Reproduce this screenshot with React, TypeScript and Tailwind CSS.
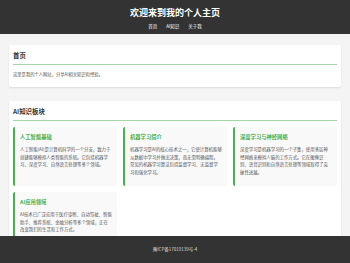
const TOPICS = [
  {
    title: '人工智能基础',
    text: '人工智能(AI)是计算机科学的一个分支，致力于创建能够模拟人类智能的系统。它包括机器学习、深度学习、自然语言处理等多个领域。',
  },
  {
    title: '机器学习简介',
    text: '机器学习是AI的核心技术之一，它使计算机能够从数据中学习并做出决策，而无需明确编程。常见的机器学习算法包括监督学习、无监督学习和强化学习。',
  },
  {
    title: '深度学习与神经网络',
    text: '深度学习是机器学习的一个子集，使用多层神经网络来模拟人脑的工作方式。它在图像识别、语音识别和自然语言处理等领域取得了突破性进展。',
  },
  {
    title: 'AI应用领域',
    text: 'AI技术已广泛应用于医疗诊断、自动驾驶、智能助手、推荐系统、金融分析等多个领域，正在改变我们的生活和工作方式。',
  },
];

const FONT = "font-['Noto_Sans_CJK_SC','Noto_Sans',sans-serif]";

export default function App() {
  return (
    <div className={`min-h-screen bg-[#f4f4f4] text-[#333] ${FONT}`}>
      {/* header */}
      <header className="flex h-[34px] flex-col items-center bg-[#333] pt-[7px] text-white">
        <h1 className="text-[9px] font-bold leading-[12px]">欢迎来到我的个人主页</h1>
        <nav className="mt-[4px] flex gap-[9px] text-[4.5px] leading-[6px]">
          <a>首页</a>
          <a>AI知识</a>
          <a>关于我</a>
        </nav>
      </header>

      <main className="flex flex-col gap-[14px] px-[9px] pt-[11px] pb-[40px]">
        {/* home */}
        <section className="rounded-[2px] bg-white px-[4px] pt-[7px] pb-[9px] shadow-[0_1px_2px_rgba(0,0,0,0.1)]">
          <h2 className="border-b border-[#a5d6a7] pb-[4px] text-[6.4px] font-bold leading-[8px]">首页</h2>
          <p className="mt-[6px] text-[4.3px] leading-[7px] text-[#555]">这里是我的个人网站，分享AI相关知识和经验。</p>
        </section>

        {/* ai knowledge */}
        <section className="rounded-[2px] bg-white px-[4px] pt-[7px] pb-[9px] shadow-[0_1px_2px_rgba(0,0,0,0.1)]">
          <h2 className="border-b border-[#a5d6a7] pb-[4px] text-[6.4px] font-bold leading-[8px]">AI知识板块</h2>
          <div className="mt-[6px] grid grid-cols-3 gap-[6px]">
            {TOPICS.map((t) => (
              <div key={t.title} className="rounded-[2px] border-l-2 border-[#4caf50] bg-[#f9f9f9] px-[5px] pt-[7px] pb-[10px]">
                <h3 className="text-[5.3px] font-bold leading-[7px] text-[#4caf50]">{t.title}</h3>
                <p className="mt-[5px] text-[4.4px] leading-[7.5px] text-[#555]">{t.text}</p>
              </div>
            ))}
          </div>
        </section>
      </main>

      {/* footer */}
      <footer className="fixed inset-x-0 bottom-0 flex h-[27px] items-center justify-center bg-[#333] text-[4.5px] text-[#ddd]">
        豫ICP备17019139号-4
      </footer>
    </div>
  );
}
